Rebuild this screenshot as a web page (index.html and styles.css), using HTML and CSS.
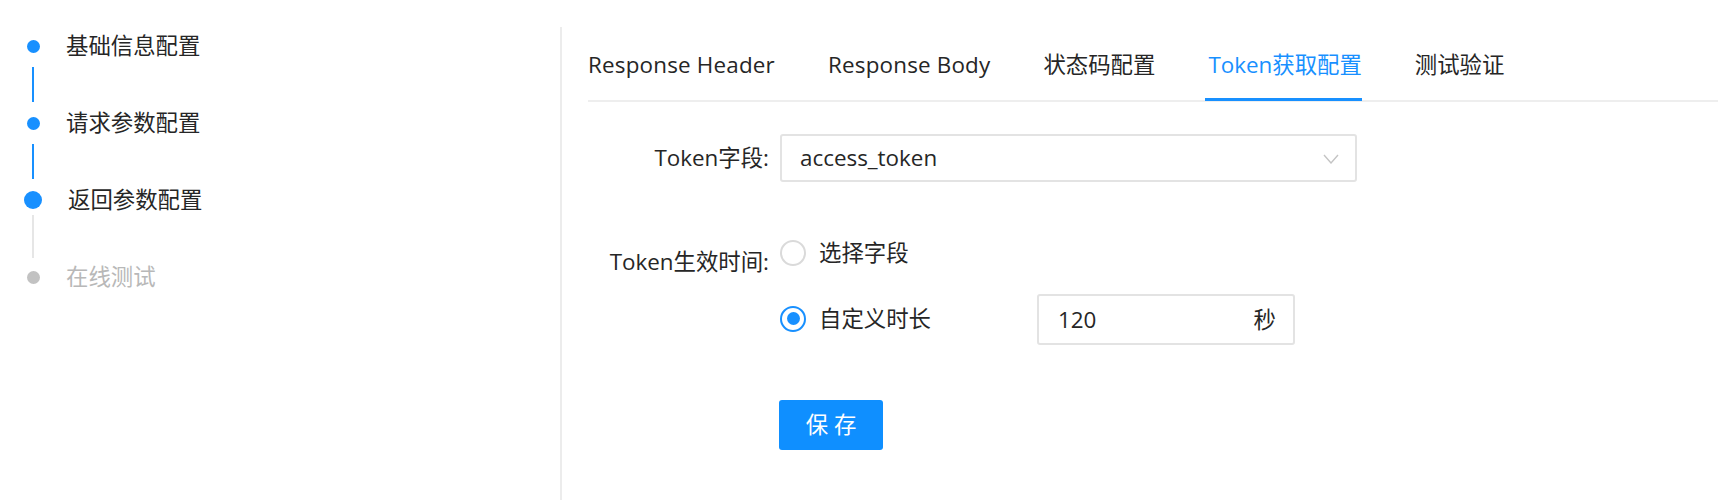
FILE: index.html
```html
<!DOCTYPE html>
<html lang="zh-CN">
<head>
<meta charset="utf-8">
<title>返回参数配置</title>
<link rel="stylesheet" href="styles.css">
</head>
<body>
<div class="page">
  <aside class="steps">
    <div class="step done"><span class="dot-col"><span class="dot"></span></span><span class="step-text">基础信息配置</span></div>
    <div class="connector done"></div>
    <div class="step done"><span class="dot-col"><span class="dot"></span></span><span class="step-text">请求参数配置</span></div>
    <div class="connector done"></div>
    <div class="step current"><span class="dot-col"><span class="dot"></span></span><span class="step-text">返回参数配置</span></div>
    <div class="connector todo"></div>
    <div class="step todo"><span class="dot-col"><span class="dot"></span></span><span class="step-text">在线测试</span></div>
  </aside>

  <main class="panel">
    <nav class="tabs">
      <div class="tab latin">Response Header</div>
      <div class="tab latin">Response Body</div>
      <div class="tab">状态码配置</div>
      <div class="tab active">Token获取配置</div>
      <div class="tab">测试验证</div>
    </nav>

    <form class="form">
      <div class="row row-field">
        <label class="label">Token字段:</label>
        <div class="select">
          <span class="select-value">access_token</span>
          <svg class="chevron" width="16" height="10" viewBox="0 0 16 10"><polyline points="1,1 8,9 15,1" fill="none" stroke="#c4c4c4" stroke-width="1.4"/></svg>
        </div>
      </div>

      <div class="row row-time">
        <label class="label label-time">Token生效时间:</label>
        <div class="radios">
          <div class="radio-item first">
            <span class="radio"></span>
            <span class="radio-text">选择字段</span>
          </div>
          <div class="radio-item second">
            <span class="radio checked"></span>
            <span class="radio-text">自定义时长</span>
            <div class="duration">
              <span class="duration-value">120</span>
              <span class="duration-unit">秒</span>
            </div>
          </div>
        </div>
      </div>

      <div class="row row-actions">
        <button type="button" class="btn-primary">保 存</button>
      </div>
    </form>
  </main>
</div>
</body>
</html>
```

FILE: styles.css
```css
* {
  box-sizing: border-box;
}

html, body {
  margin: 0;
  padding: 0;
  background: #ffffff;
}

body {
  font-family: "Open Sans", "Noto Sans CJK SC", sans-serif;
  font-size: 22.4px;
  color: #262626;
}

.page {
  display: flex;
  width: 1718px;
  height: 500px;
  overflow: hidden;
}

/* ---------- steps ---------- */
.steps {
  width: 560px;
  flex: none;
  padding-top: 31px;
  display: flex;
  flex-direction: column;
}

.step {
  display: flex;
  align-items: center;
  height: 30px;
}

.dot-col {
  width: 66px;
  display: flex;
  justify-content: center;
  align-items: center;
}

.dot {
  width: 13px;
  height: 13px;
  border-radius: 50%;
  background: #1890ff;
}

.step.current .dot {
  width: 18px;
  height: 18px;
}

.step.todo .dot {
  background: #c2c2c2;
}

.step-text {
  line-height: 30px;
  color: #262626;
}

.step.current .step-text {
  margin-left: 2px;
}

.step.todo .step-text {
  color: #b8b8b8;
}

.connector {
  width: 2px;
  height: 35px;
  margin: 6px 0 6px 32px;
  background: #1890ff;
}

.connector.todo {
  background: #e6e6e6;
  height: 43px;
  margin-top: 0;
}

.connector.todo + .step {
  margin-top: -2px;
}

/* ---------- panel ---------- */
.panel {
  flex: 1;
  margin-top: 27px;
  border-left: 2px solid #ececec;
  padding-left: 26px;
}

.tabs {
  display: flex;
  border-bottom: 2px solid #eeeeee;
}

.tab {
  position: relative;
  padding: 23px 0 20px;
  line-height: 30px;
  margin-right: 53px;
  color: #262626;
  white-space: nowrap;
}

.tab.latin {
  letter-spacing: 0.2px;
}

.tab.active {
  color: #1890ff;
}

.tab.active::after {
  content: "";
  position: absolute;
  left: -3px;
  right: 0;
  bottom: -1px;
  height: 3px;
  background: #1890ff;
}

/* ---------- form ---------- */
.form {
  margin-top: 32px;
}

.row {
  display: flex;
  align-items: flex-start;
}

.label {
  width: 192px;
  flex: none;
  padding-right: 11px;
  text-align: right;
  line-height: 30px;
  color: #262626;
  white-space: nowrap;
}

.row-field {
  align-items: center;
}

.select {
  width: 577px;
  height: 48px;
  border: 2px solid #e3e3e3;
  border-radius: 3px;
  display: flex;
  align-items: center;
  justify-content: space-between;
  padding: 0 16px 0 18px;
}

.select-value {
  line-height: 30px;
  color: #262626;
}

.chevron {
  display: block;
  margin-top: 2px;
}

.row-time {
  margin-top: 52px;
}

.label-time {
  padding-top: 13px;
}

.radios {
  display: flex;
  flex-direction: column;
}

.radio-item {
  display: flex;
  align-items: center;
}

.radio-item.first {
  height: 37px;
}

.radio-item.second {
  margin-top: 23px;
  height: 51px;
}

.radio {
  width: 26px;
  height: 26px;
  border-radius: 50%;
  border: 2px solid #dadada;
  display: flex;
  align-items: center;
  justify-content: center;
  flex: none;
}

.radio.checked {
  border-color: #1890ff;
}

.radio.checked::after {
  content: "";
  width: 13px;
  height: 13px;
  border-radius: 50%;
  background: #1890ff;
}

.radio-text {
  margin-left: 13px;
  line-height: 30px;
  color: #262626;
}

.radio-item.second .radio,
.radio-item.second .radio-text {
  position: relative;
  top: -1px;
}

.duration {
  margin-left: 106px;
  width: 258px;
  height: 51px;
  border: 2px solid #e3e3e3;
  border-radius: 3px;
  display: flex;
  align-items: center;
  justify-content: space-between;
  padding: 0 17px 0 19px;
}

.duration-value,
.duration-unit {
  line-height: 30px;
  color: #262626;
}

.row-actions {
  margin-top: 55px;
  padding-left: 191px;
}

.btn-primary {
  width: 104px;
  height: 50px;
  border: none;
  border-radius: 3px;
  background: #0f8fff;
  color: #ffffff;
  font-family: "Open Sans", "Noto Sans CJK SC", sans-serif;
  font-size: 22.4px;
  line-height: 30px;
  padding: 0;
}
```
